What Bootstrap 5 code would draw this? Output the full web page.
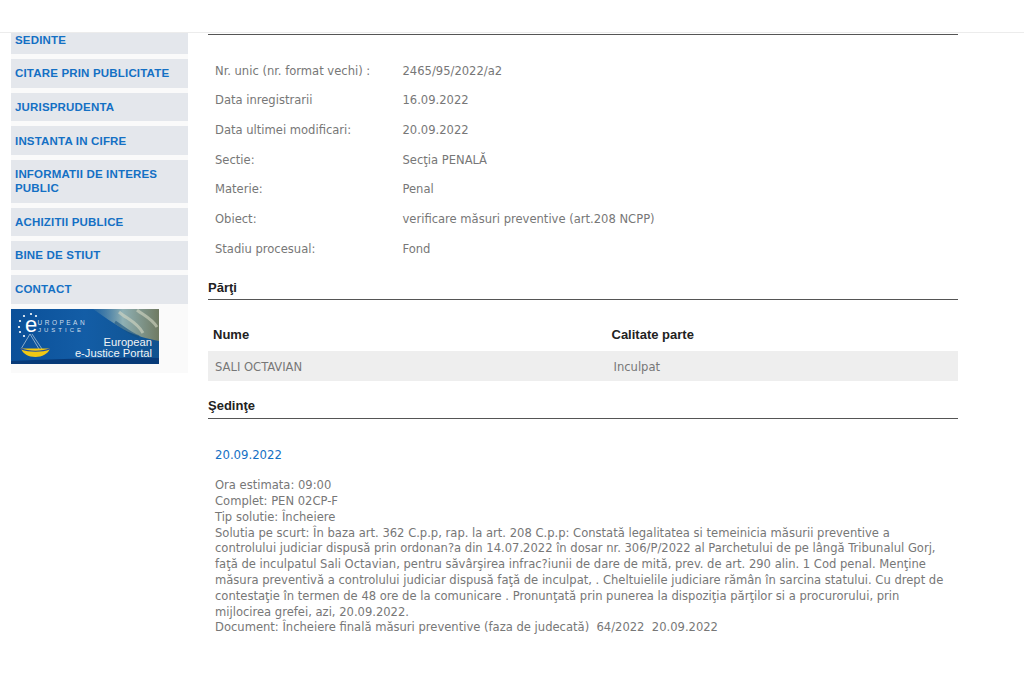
<!DOCTYPE html>
<html lang="ro">
<head>
<meta charset="utf-8">
<title>Dosar</title>
<link href="https://cdn.jsdelivr.net/npm/bootstrap@5.3.0/dist/css/bootstrap.min.css" rel="stylesheet">
<style>
html,body{height:100%;overflow:hidden}
body{background:#fff;font-family:"DejaVu Sans Condensed","DejaVu Sans",sans-serif;font-size:12.85px;color:#777}
.topstrip{height:33px;border-bottom:1px solid #ececec;background:#fff}
.page-wrap{padding-left:11px}
.side-col{width:177px;flex:none;background:#fafafa;height:340px}
.side-link{display:block;background:#e4e7ec;color:#1470c4;font:bold 11.5px/14px "Liberation Sans",sans-serif;letter-spacing:.18px;text-decoration:none;padding:7.2px 4px 7.47px;margin-bottom:5px}
.side-link.first{padding:0 4px 7px;height:21px}
.portal{display:block;width:148px;height:55px;margin-top:1.33px}
.main-col{width:750px;flex:none;margin-left:20px}
.top-rule{height:1px;background:#555;margin-top:1px}
.facts{margin:20.6px 0 0 7px}
.fact{display:flex;height:29.67px;line-height:29.67px;white-space:nowrap}
.fact-l{width:187.5px;flex:none}
.sect{font:bold 13px/15px "Liberation Sans",sans-serif;color:#222;border-bottom:1px solid #555;padding-bottom:4px}
.sect-a{margin-top:17.1px}
.sect-b{margin-top:17.5px;padding-bottom:5px}
.ptable{margin:27px 0 0}
.phead{display:flex;font:bold 13px/16px "Liberation Sans",sans-serif;color:#222;height:24px;padding:0 5px}
.prow{display:flex;background:#eee;height:29.5px;line-height:31px;padding:0 7px}
.pc1{width:398.5px;flex:none}
.date-link{display:block;color:#1470c4;text-decoration:none;margin:27px 0 13px 7px;line-height:17px;font-size:13px}
.detail{margin-left:7px;line-height:15.8px;white-space:nowrap;margin-top:14px}
</style>
</head>
<body>
<div class="topstrip"></div>
<div class="page-wrap d-flex">
  <aside class="side-col">
    <a class="side-link first" href="#">SEDINTE</a>
    <a class="side-link" href="#">CITARE PRIN PUBLICITATE</a>
    <a class="side-link" href="#">JURISPRUDENTA</a>
    <a class="side-link" href="#">INSTANTA IN CIFRE</a>
    <a class="side-link" href="#">INFORMATII DE INTERES PUBLIC</a>
    <a class="side-link" href="#">ACHIZITII PUBLICE</a>
    <a class="side-link" href="#">BINE DE STIUT</a>
    <a class="side-link" href="#">CONTACT</a>
    <svg class="portal" viewBox="0 0 148 55" role="img" aria-label="European e-Justice Portal">
      <defs>
        <linearGradient id="bg" x1="0" y1="0" x2="1" y2="0"><stop offset="0" stop-color="#0b5099"/><stop offset=".5" stop-color="#135da6"/><stop offset="1" stop-color="#0f528f"/></linearGradient>
        <linearGradient id="sh" x1="0" y1="0" x2="1" y2="0"><stop offset="0" stop-color="#5f8faa" stop-opacity=".2"/><stop offset=".45" stop-color="#8fb0b4"/><stop offset="1" stop-color="#6f7a62"/></linearGradient>
      </defs>
      <rect width="148" height="55" fill="url(#bg)"/>
      <path d="M82 0H148V32C138 30 124 27 112 20C102 14 92 7 82 0Z" fill="url(#sh)"/>
      <path d="M108 3C116 10 126 13 132 24M126 1C132 6 140 9 146 18" stroke="#d6d8c4" stroke-width="3" fill="none" opacity=".6"/>
      <path d="M104 13C112 18 118 24 128 28" stroke="#16507f" stroke-width="3" fill="none" opacity=".6"/>
      <path d="M0 52C50 50 100 48 148 49V55H0Z" fill="#073a78"/>
      <g fill="#fff"><circle cx="13" cy="7" r="1.1"/><circle cx="20" cy="5" r="1.1"/><circle cx="25" cy="7" r="1.1"/><circle cx="9" cy="12" r="1.1"/><circle cx="8" cy="18" r="1.1"/><circle cx="9" cy="23" r="1.1"/><circle cx="13" cy="27" r="1.1"/></g>
      <text x="14" y="23" fill="#fff" font-family="Liberation Sans" font-size="22">e</text>
      <text x="26.5" y="16" fill="#cfdeeb" font-family="Liberation Sans" font-size="6.5" letter-spacing="2.5">UROPEAN</text>
      <text x="27" y="22.5" fill="#cfdeeb" font-family="Liberation Sans" font-size="6" letter-spacing="3">JUSTICE</text>
      <path d="M19 25L10 40M19 25L28 40M21 25L31 40" stroke="#a9c2d6" stroke-width=".8" fill="none"/>
      <path d="M10 39.5H39C37 45 31 48 24.5 48C17 48 12 45 10 39.5Z" fill="#f2c814"/>
      <path d="M10 39C18 42.5 31 42.5 39 39L39 40.5C31 43.5 18 43.5 10 40.5Z" fill="#234f9e"/>
      <text x="141" y="37" text-anchor="end" fill="#f0f3f5" font-family="Liberation Sans" font-size="11.2">European</text>
      <text x="141" y="48" text-anchor="end" fill="#f0f3f5" font-family="Liberation Sans" font-size="11.2">e-Justice Portal</text>
    </svg>
  </aside>
  <main class="main-col">
    <div class="top-rule"></div>
    <div class="facts">
      <div class="fact"><div class="fact-l">Nr. unic (nr. format vechi) :</div><div>2465/95/2022/a2</div></div>
      <div class="fact"><div class="fact-l">Data inregistrarii</div><div>16.09.2022</div></div>
      <div class="fact"><div class="fact-l">Data ultimei modificari:</div><div>20.09.2022</div></div>
      <div class="fact"><div class="fact-l">Sectie:</div><div>Secţia PENALĂ</div></div>
      <div class="fact"><div class="fact-l">Materie:</div><div>Penal</div></div>
      <div class="fact"><div class="fact-l">Obiect:</div><div>verificare măsuri preventive (art.208 NCPP)</div></div>
      <div class="fact"><div class="fact-l">Stadiu procesual:</div><div>Fond</div></div>
    </div>
    <div class="sect sect-a">Părţi</div>
    <div class="ptable">
      <div class="phead"><div class="pc1">Nume</div><div>Calitate parte</div></div>
      <div class="prow"><div class="pc1">SALI OCTAVIAN</div><div>Inculpat</div></div>
    </div>
    <div class="sect sect-b">Şedinţe</div>
    <a class="date-link" href="#">20.09.2022</a>
    <div class="detail">
      Ora estimata: 09:00<br>
      Complet: PEN 02CP-F<br>
      Tip solutie: Încheiere<br>
      Solutia pe scurt: În baza art. 362 C.p.p, rap. la art. 208 C.p.p: Constată legalitatea si temeinicia măsurii preventive a<br>
      controlului judiciar dispusă prin ordonan?a din 14.07.2022 în dosar nr. 306/P/2022 al Parchetului de pe lângă Tribunalul Gorj,<br>
      faţă de inculpatul Sali Octavian, pentru săvârşirea infrac?iunii de dare de mită, prev. de art. 290 alin. 1 Cod penal. Menţine<br>
      măsura preventivă a controlului judiciar dispusă faţă de inculpat, . Cheltuielile judiciare rămân în sarcina statului. Cu drept de<br>
      contestaţie în termen de 48 ore de la comunicare . Pronunţată prin punerea la dispoziţia părţilor si a procurorului, prin<br>
      mijlocirea grefei, azi, 20.09.2022.<br>
      Document: Încheiere finală măsuri preventive (faza de judecată)&nbsp; 64/2022&nbsp; 20.09.2022
    </div>
  </main>
</div>
<script src="https://cdn.jsdelivr.net/npm/bootstrap@5.3.0/dist/js/bootstrap.bundle.min.js"></script>
</body>
</html>
